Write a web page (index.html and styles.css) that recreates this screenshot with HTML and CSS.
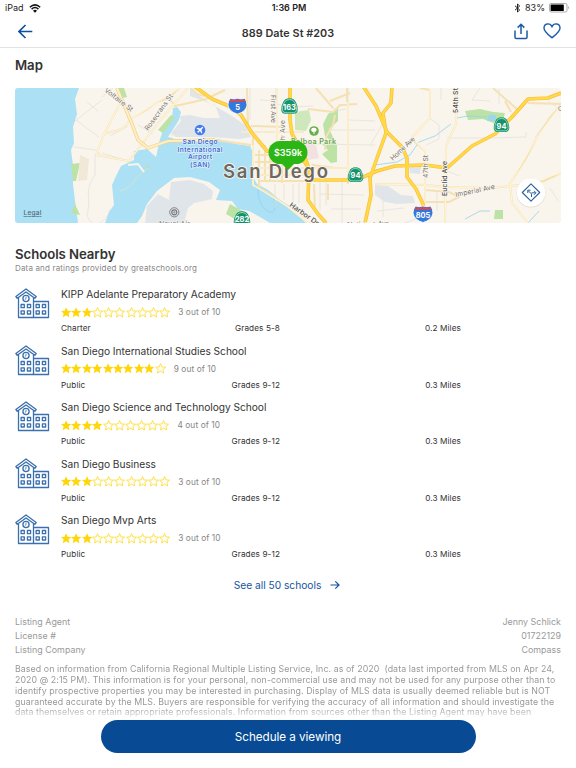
FILE: index.html
```html
<!DOCTYPE html>
<html lang="en">

<head>
	<meta charset="UTF-8">
	<title>889 Date St #203</title>
	<link rel="stylesheet" href="styles.css">
</head>

<body>
	<!-- shared icons -->
	<svg class="defs" width="0" height="0">
		<symbol id="star-on" viewBox="0 0 11 11">
			<path d="M5.4 0 7 3.6 10.9 3.9 8 6.5 8.9 10.5 5.4 8.4 1.9 10.5 2.8 6.5 -.1 3.9 3.8 3.6Z" fill="#ffd60a" />
		</symbol>
		<symbol id="star-off" viewBox="0 0 11 11">
			<path d="M5.5 .6 6.9 3.9 10.500 4.200 7.800 6.500 8.600 10 5.500 8.100 2.400 10 3.200 6.500 .5 4.200 4.100 3.900Z" fill="#fff" stroke="#ffdc32" stroke-width=".9" />
		</symbol>
		<symbol id="school" viewBox="0 0 35 31">
			<g fill="none" stroke="#3b6fae" stroke-width="1.3" stroke-linejoin="round">
				<path d="M3.5 9.5V29.5H33.5V13.5H18.5M18.5 9.5V29.5" />
				<path d="M.9 8.5 11 1 21.2 8.5 19.8 10.3 11 4 2.2 10.3Z" />
				<circle cx="11" cy="10.5" r="3.1" />
				<path d="M11 8.7V10.8L9.8 11.5" stroke-width=".8" />
				<path d="M6.1 16.5h3.2v3.2H6.1zM12.4 16.5h3.2v3.2h-3.2zM6.1 22.8h3.2V26H6.1zM12.4 22.8h3.2V26h-3.2zM21.1 16.5h3.2v3.2h-3.2zM27.4 16.5h3.2v3.2h-3.2zM21.1 22.8h3.2V26h-3.2zM27.4 22.8h3.2V26h-3.2z" />
			</g>
		</symbol>
		<symbol id="shield" viewBox="-9 -9 18 18">
			<path d="M0-8.700Q5-8.700 6.800-4.500Q9-.5 8.700 4Q8 7.800 4.500 7.800H-4.500Q-8 7.800-8.700 4Q-9-.5-6.800-4.500Q-5-8.700 0-8.700Z" fill="#14936b" />
			<path d="M0-7.500Q4.200-7.500 5.800-3.800Q7.800 0 7.500 3.800Q7 6.600 4 6.600H-4Q-7 6.600-7.500 3.800Q-7.800 0-5.800-3.800Q-4.200-7.500 0-7.500Z" fill="none" stroke="#d5f5e6" stroke-width=".7" />
		</symbol>
		<symbol id="interstate" viewBox="-11 -9 22 18">
			<path d="M-7.5-8Q-4-6.7 0-8Q4-6.7 7.5-8Q10-5 10-1Q9 6 0 8.5Q-9 6-10-1Q-10-5-7.5-8Z" fill="#3478dc" stroke="#fff" stroke-width=".8" />
			<path d="M-7.3-7Q-4-5.8 0-7Q4-5.8 7.3-7L8.5-4.5H-8.5Z" fill="#e34545" />
		</symbol>
	</svg>

	<header class="header">
		<div class="status">
			<div class="status-left">
				<span>iPad</span>
				<svg width="12" height="9" viewBox="0 0 12 9">
					<path d="M.8 3.2Q6-1.5 11.2 3.2M2.6 5.1Q6 2 9.4 5.1" fill="none" stroke="#111" stroke-width="1.5" />
					<path d="M4 6.7Q6 5 8 6.7L6 8.8Z" fill="#111" />
				</svg>
			</div>
			<span class="time">1:36 PM</span>
			<div class="status-right">
				<svg width="7" height="10" viewBox="0 0 7 10">
					<path d="M1 2.8 5.7 7 3.5 9V1L5.7 3 1 7.2" fill="none" stroke="#222" stroke-width="1" />
				</svg>
				<span class="percent">83%</span>
				<svg width="21" height="10" viewBox="0 0 21 10">
					<rect x=".5" y=".5" width="17.5" height="8.5" rx="1.5" fill="#fff" stroke="#999" stroke-width=".8" />
					<rect x="1.6" y="1.6" width="13.2" height="6.3" rx=".5" fill="#000" />
					<path d="M19 3Q20.6 4.7 19 6.5Z" fill="#888" />
				</svg>
			</div>
		</div>
		<nav class="nav">
			<svg width="15" height="15" viewBox="0 0 15 15">
				<path d="M14.3 7.5H1M7.5 1 1 7.5 7.5 14" fill="none" stroke="#0d4f9e" stroke-width="1.6" />
			</svg>
			<h1>889 Date St #203</h1>
			<div class="nav-actions">
				<svg width="14" height="17" viewBox="0 0 14 17">
					<path d="M1 7.5V14.2Q1 15.5 2.3 15.5H11.7Q13 15.5 13 14.2V7.5M7 11V1.500M3.700 4.600 7 1.300 10.300 4.600" fill="none" stroke="#1d59a6" stroke-width="1.500" />
				</svg>
				<svg width="18" height="16" viewBox="0 0 18 16">
					<path d="M9 14.8C6 12.3 1 8.7 1 5C1 .2 7-.5 9 3.6C11-.5 17 .2 17 5C17 8.7 12 12.3 9 14.8Z" fill="none" stroke="#1d59a6" stroke-width="1.400" />
				</svg>
			</div>
		</nav>
	</header>

	<main class="content">
		<h2 class="map-title">Map</h2>
		<div class="map">
			<svg width="546" height="135" viewBox="15 88 546 135">
				<rect x="15" y="88" width="546" height="135" fill="#f9f4ec" />
				<!-- ocean and bay -->
				<g fill="#ace0f5">
					<path d="M15 88H79L75 99 77 114 73 127 74 143 71 150 73 165 73 184 75 201 78 223H15Z" />
					<path d="M173 108 177 107 181 112 179 120 168 137 182 141 200 140 218 139 236 144 250 146 254 155 253 177 257 184 268 190 280 200 291 207 306 223H270L260 217 249 211 238 209 232 201 216 200 220 190 209 182 190 177 174 178 157 191 147 204 142 216 137 223H105L109 212 114 205 112 185 116 176 121 166 134 160 134 151 141 150 147 149 156 157 160 139 163 131 172 118Z" />
				</g>
				<!-- airport and navy base -->
				<g fill="#e0e5ea">
					<path d="M180 116 190 115 204 118 220 118 215 105 190 96 190 88 205 100 232 116 245 125 251 137 240 139 210 137 176 137 171 133 181 121Z" />
					<path d="M190 180 204 184 213 191 212 199 194 203 188 208 184 223H145L147 206 158 194 169 200 171 182Z" />
					<path d="M375 185 388 186 401 195 413 196 415 203 397 204 385 202 375 195ZM409 167 421 167 420 174 410 173Z" />
				</g>
				<!-- parks -->
				<g fill="#bce2a6">
					<path d="M71 164 80 163 76 181 73 181ZM158 130 171 115 175 117 163 133ZM146 167 150 165 147 171ZM118 88H124L127 97 122 98ZM323 124 328 114 338 108 338 121 329 129 337 145 337 162 331 163 322 154 328 150 322 144 332 142 325 136ZM465 111 480 109 493 112 505 113 503 120 496 124 483 119 468 120ZM495 210H503V219H494ZM230 204 246 213 240 222 226 214ZM75 204 71 213 80 215Z" />
					<path d="M295 112 309 110 311 120 306 131 295 130Z" opacity=".7" />
				</g>
				<path d="M80 155 89 159 87 180 78 181Z" fill="#f2e8d8" />
				<path d="M305 144 315 141 319 158 308 160Z" fill="#f3e1e2" />
				<path d="M488 115 496 115 496 121 487 121Z" fill="#9bd8e8" />
				<path d="M120 191C134 188 133 177 149 168" fill="none" stroke="#d5e5ca" stroke-width="1" />
				<path d="M128 165 138 164 144 172" fill="none" stroke="#f9f4ec" stroke-width="2" />
				<path d="M258 187C256 212 282 224 273 197M457 118 468 116 487 117M375 165 397 162 410 155 419 142 435 136 451 124M465 219 480 211 490 211M528 223 539 211" fill="none" stroke="#91d4ef" stroke-width=".8" />
				<!-- minor streets -->
				<path d="M75 121 102 100M87 102 98 111M76 120 99 137M74 147 95 150 100 154M102 97 113 88M95 155 95 175C83 193 92 196 87 215 93 233 108 220 110 209M110 136 128 126M153 134 138 125M171 136 176 132 202 132 206 135M102 153 128 161M250 88V120M260 100 276 101V88M277 104 290 107 313 106M322 95 336 111 346 109M348 88V163M349 120 375 121M330 130 375 130M314 144 375 145M275 184V208M284 184V200M293 184V212M299 183V203M320 181V210M326 181V205M342 181V223M319 194 364 195M331 209 361 209M371 144 383 123M429 118 439 125V139L426 145M447 138 490 138 526 137V132M460 176 447 171M441 88V100M480 88 472 100 490 101M499 104 499 89M548 101 561 110M550 188 559 202M437 190V211M383 188V217M377 211 404 208M535 137 550 118M405 223 424 216" fill="none" stroke="#e2e0db" stroke-width=".7" />
				<!-- city roads, casing first -->
				<g fill="none" stroke-linejoin="round">
					<path d="M117 88 132 124 138 140 148 148 168 141 215 140 251 145M188 88 161 119 129 161 96 155 104 134 121 102 116 96M104 134 122 129 132 118 146 110 157 102 169 98 179 88M169 98 175 106 189 103 206 99 225 90M191 88 197 94 205 96M247 88 248 125M251 126 285 127M241 132 304 132M253 136V185L267 192 287 206 317 230M259 150V187M265 145V182M270 145V181M277 88V181M282 135V183M255 155H308M255 162H308M258 168H350M260 175H308M260 181H310M348 103V184M308 109 333 112 340 105 357 104M335 115 333 125 326 137 325 150M312 165 336 168M316 88 333 108M347 88V102M330 101 350 93M420 88 430 90V118L412 137 415 142 425 151V205M457 88 456 124 446 146 445 223M425 202 449 202 459 197 449 192 425 190M375 184 425 185 447 187 492 188 519 185 544 181 561 173M536 139 549 119 561 105M536 139 525 160 510 183 512 203 528 223M493 88 518 110M528 103 561 104M505 101 511 112M314 184 315 210M328 184 328 200" stroke="#f4e1b4" stroke-width="2" />
					<path d="M117 88 132 124 138 140 148 148 168 141 215 140M188 88 161 119 129 161 96 155 104 134 121 102M104 134 122 129 132 118 157 102 179 88M253 145V185L287 206 317 230M277 88V181M241 132H304M258 168H350M260 175H308M348 103V180M457 88 456 124 446 146 445 223M375 184 425 185 447 187 492 188 519 185 561 173M430 88V118L412 137 425 151V205M536 139 510 183 512 203 528 223M536 139 561 105" stroke="#fff6d8" stroke-width="1.2" />
					<path d="M117 88 132 124 138 140 148 148 168 141 215 140" stroke="#f1d08a" stroke-width="3.4" />
					<path d="M117 88 132 124 138 140 148 148 168 141 215 140" stroke="#fff0c0" stroke-width="2" />
				</g>
				<!-- freeways -->
				<g fill="none" stroke-linejoin="round">
					<path d="M194 86 212 99 229 106 241 115 252 133 267 151 290 158 304 161 309 169 308 200 318 214 326 223M290 86V120L292 134 304 154 309 169M309 180H345L361 178 377 171 395 166 425 165 447 168 472 146 495 134 512 117 528 99 548 98 561 93M363 86 376 106 387 132 402 147 407 158 407 177 416 189 423 204V216M392 86 391 103 383 113 386 133 377 158 370 178 371 195 365 223" stroke="#f8bd48" stroke-width="3.6" />
					<path d="M194 86 212 99 229 106 241 115 252 133 267 151 290 158 304 161 309 169 308 200 318 214 326 223M290 86V120L292 134 304 154 309 169M309 180H345L361 178 377 171 395 166 425 165 447 168 472 146 495 134 512 117 528 99 548 98 561 93M363 86 376 106 387 132 402 147 407 158 407 177 416 189 423 204V216M392 86 391 103 383 113 386 133 377 158 370 178 371 195 365 223" stroke="#ffda42" stroke-width="2.3" />
				</g>
				<!-- street names -->
				<g class="street">
					<text transform="translate(104 91) rotate(38)" textLength="34" lengthAdjust="spacingAndGlyphs">Voltaire St</text>
					<text transform="translate(148 131) rotate(-54)" textLength="43">Rosecrans St</text>
					<text transform="translate(271 95) rotate(90)" textLength="28">First Ave</text>
					<text transform="translate(285 148) rotate(-90)" textLength="28">4th Ave</text>
					<text transform="translate(393 161) rotate(-44)" textLength="31">Home Ave</text>
					<text transform="translate(428 178) rotate(-90)" textLength="23">47th St</text>
					<text transform="translate(456 197) rotate(-12)" textLength="40">Imperial Ave</text>
					<text x="159" y="226" textLength="31">Naval Air</text>
					<text x="347" y="227" textLength="28" lengthAdjust="spacingAndGlyphs">National</text>
					<text x="378" y="226" textLength="11" lengthAdjust="spacingAndGlyphs">Ave</text>
					<text x="558" y="111">C</text>
				</g>
				<g class="street dark">
					<text transform="translate(458 113) rotate(-90)" textLength="25">54th St</text>
					<text transform="translate(447 196) rotate(-90)" textLength="35">Euclid Ave</text>
					<text transform="translate(289 206) rotate(35)" textLength="34" lengthAdjust="spacingAndGlyphs">Harbor Dr</text>
				</g>
				<g class="airport">
					<text x="200" y="144" textLength="35">San Diego</text>
					<text x="200" y="151.500" textLength="45">International</text>
					<text x="200" y="159" textLength="24">Airport</text>
					<text x="200" y="166.500" textLength="20">(SAN)</text>
				</g>
				<circle cx="200" cy="130" r="5.3" fill="#477cec" />
				<path d="M203.2 126.8 201.8 127.3 200.3 128.6 197 127.8 196.5 128.5 199 130 197.8 131.5 196.7 131.5 198.5 133.3 198.5 132.2 200 131 201.5 133.5 202.2 133 201.4 129.7 202.7 128.2Z" fill="#fff" />
				<circle cx="314" cy="131" r="4.8" fill="#69ae4a" />
				<path d="M314 127.8a2.5 2 0 0 0-2.4 3.2q.6 1.2 1.9.8v2.3h1v-2.3q1.5.3 2-1a2.3 2.3 0 0 0-2.500-3Z" fill="#fff" />
				<text class="park" x="291" y="144" textLength="45">Balboa Park</text>
				<g fill="none" stroke="#77797c">
					<circle cx="174.3" cy="212.3" r="4.6" stroke-width=".9" />
					<circle cx="174.3" cy="212.3" r="2.5" stroke-width="1.2" />
					<circle cx="174.3" cy="212.3" r=".7" stroke-width=".8" />
				</g>
				<text class="city" x="223" y="178" textLength="105">San Diego</text>
				<!-- route shields -->
				<use href="#interstate" x="227" y="97" width="21" height="18" />
				<use href="#interstate" x="412" y="205" width="22" height="18" />
				<use href="#shield" x="280.5" y="98" width="18" height="17" />
				<use href="#shield" x="347" y="167" width="17" height="16" />
				<use href="#shield" x="493" y="117" width="17" height="16" />
				<use href="#shield" x="232.5" y="211" width="19" height="17" />
				<g class="route">
					<text x="237.5" y="110">5</text>
					<text x="423" y="217.5">805</text>
					<text x="289.5" y="109.8">163</text>
					<text x="355.5" y="178">94</text>
					<text x="501.5" y="128.5">94</text>
					<text x="242" y="221.8">282</text>
				</g>
				<!-- price marker -->
				<path d="M280 141H296A11 11 0 0 1 296 164H294L288 170 282 164H280A11 11 0 0 1 280 141Z" fill="#2bb616" />
				<text class="price" x="288" y="156" textLength="28">$359k</text>
				<text class="legal" x="23.500" y="215" textLength="18">Legal</text>
				<!-- directions button -->
				<circle cx="531" cy="193" r="14.5" fill="#ddd9d2" />
				<circle cx="531" cy="192.5" r="14.3" fill="#fff" />
				<g fill="none" stroke="#285f9f" stroke-width="1.1" stroke-linejoin="round">
					<path d="M531 183.8 539.7 192.5 531 201.2 522.3 192.5Z" />
					<path d="M531.5 197V194L528 190.5M527.8 193V190.2H530.6M531.500 192.8H535.5M534 190.8 536 192.8 534 194.800" stroke-width="1" />
				</g>
			</svg>
		</div>

		<section class="schools">
			<h2>Schools Nearby</h2>
			<p class="source">Data and ratings provided by greatschools.org</p>
			<div class="school">
				<svg class="school-icon"><use href="#school" /></svg>
				<div class="school-info">
					<h3>KIPP Adelante Preparatory Academy</h3>
					<div class="rating" data-rating="3"><span>3 out of 10</span></div>
					<div class="facts"><span>Charter</span><span>Grades 5-8</span><span>0.2 Miles</span></div>
				</div>
			</div>
			<div class="school">
				<svg class="school-icon"><use href="#school" /></svg>
				<div class="school-info">
					<h3>San Diego International Studies School</h3>
					<div class="rating" data-rating="9"><span>9 out of 10</span></div>
					<div class="facts"><span>Public</span><span>Grades 9-12</span><span>0.3 Miles</span></div>
				</div>
			</div>
			<div class="school">
				<svg class="school-icon"><use href="#school" /></svg>
				<div class="school-info">
					<h3>San Diego Science and Technology School</h3>
					<div class="rating" data-rating="4"><span>4 out of 10</span></div>
					<div class="facts"><span>Public</span><span>Grades 9-12</span><span>0.3 Miles</span></div>
				</div>
			</div>
			<div class="school">
				<svg class="school-icon"><use href="#school" /></svg>
				<div class="school-info">
					<h3>San Diego Business</h3>
					<div class="rating" data-rating="3"><span>3 out of 10</span></div>
					<div class="facts"><span>Public</span><span>Grades 9-12</span><span>0.3 Miles</span></div>
				</div>
			</div>
			<div class="school">
				<svg class="school-icon"><use href="#school" /></svg>
				<div class="school-info">
					<h3>San Diego Mvp Arts</h3>
					<div class="rating" data-rating="3"><span>3 out of 10</span></div>
					<div class="facts"><span>Public</span><span>Grades 9-12</span><span>0.3 Miles</span></div>
				</div>
			</div>
			<a class="see-all" href="#">
				<span>See all 50 schools</span>
				<svg width="10" height="10" viewBox="0 0 10 10">
					<path d="M.5 5H9M5.3 1.3 9 5 5.3 8.7" fill="none" stroke="#14539e" stroke-width="1.2" />
				</svg>
			</a>
		</section>

		<section class="listing">
			<div class="listing-row"><span>Listing Agent</span><span>Jenny Schlick</span></div>
			<div class="listing-row"><span>License #</span><span>01722129</span></div>
			<div class="listing-row"><span>Listing Company</span><span>Compass</span></div>
			<p class="legal-text">Based on information from California Regional Multiple Listing Service, Inc. as of 2020 &nbsp;(data last imported from MLS on Apr 24,<br>2020 @ 2:15 PM). This information is for your personal, non-commercial use and may not be used for any purpose other than to<br>identify prospective properties you may be interested in purchasing. Display of MLS data is usually deemed reliable but is NOT<br>guaranteed accurate by the MLS. Buyers are responsible for verifying the accuracy of all information and should investigate the<br>data themselves or retain appropriate professionals. Information from sources other than the Listing Agent may have been</p>
		</section>
	</main>

	<footer class="footer">
		<button class="schedule">Schedule a viewing</button>
	</footer>

	<script>
		// ten stars in front of each "n out of 10"
		var ratings = document.querySelectorAll('.rating');
		for (var i = 0; i < ratings.length; i++) {
			var stars = '';
			for (var j = 0; j < 10; j++) {
				var state = j < ratings[i].dataset.rating ? 'on' : 'off';
				stars += '<svg class="star ' + state + '"><use href="#star-' + state + '"/></svg>';
			}
			ratings[i].insertAdjacentHTML('afterbegin', stars);
		}
	</script>
</body>

</html>
```
FILE: styles.css
```css
* {
	box-sizing: border-box;
}

body {
	margin: 0;
	height: 768px;
	overflow: hidden;
	background: #fff;
	color: #333;
	font-family: Inter, "Liberation Sans", sans-serif;
	display: flex;
	flex-direction: column;
}

h1, h2, h3, p {
	margin: 0;
}

svg {
	display: block;
	flex: none;
}

.defs {
	height: 0;
	overflow: hidden;
}

/* header */
.header {
	flex: none;
	height: 48px;
	border-bottom: 1.5px solid #e3e3e3;
}

.status {
	height: 16px;
	padding: 0 6px 0 5px;
	display: grid;
	grid-template-columns: 1fr auto 1fr;
	align-items: center;
	font-size: 9px;
	line-height: 16px;
	color: #222;
}

.status-left, .status-right {
	display: flex;
	align-items: center;
	gap: 5px;
}

.status-right {
	justify-content: flex-end;
	gap: 4px;
}

.time {
	padding-left: 3px;
	font-weight: 600;
}

.nav {
	height: 30px;
	padding: 0 15px 0 18px;
	display: grid;
	grid-template-columns: 1fr auto 1fr;
	align-items: center;
}

.nav h1 {
	margin-left: -3px;
	padding-top: 5px;
	font-size: 10.8px;
	font-weight: 600;
	line-height: 14px;
	letter-spacing: 0.05px;
}

.nav-actions {
	display: flex;
	justify-content: flex-end;
	align-items: center;
	gap: 15px;
}

/* content */
.content {
	height: 672px;
	padding: 0 15px;
	overflow: hidden;
}

h2 {
	font-size: 13.2px;
	font-weight: 600;
	line-height: 18px;
	letter-spacing: -0.05px;
}

.map-title {
	padding: 8px 0 14px;
}

.map {
	height: 135px;
	border-radius: 3px;
	overflow: hidden;
}

.street {
	font-size: 6.8px;
	fill: #77736d;
	stroke: #fbf8f1;
	stroke-width: 1.2px;
	paint-order: stroke;
}

.street.dark {
	fill: #4c4b48;
	font-weight: 500;
}

.airport {
	font-size: 6.6px;
	font-weight: 600;
	text-anchor: middle;
	fill: #4169cf;
	stroke: #eef6fa;
	stroke-width: 1px;
	paint-order: stroke;
}

.park {
	font-size: 7.2px;
	font-weight: 600;
	fill: #65a34c;
	stroke: #fbf8f1;
	stroke-width: 1px;
	paint-order: stroke;
}

.city {
	font-size: 18.5px;
	font-weight: 600;
	fill: #6d6861;
	stroke: #fbf8f1;
	stroke-width: 1.5px;
	paint-order: stroke;
}

.route {
	font-size: 7.4px;
	font-weight: 700;
	text-anchor: middle;
	fill: #fff;
}

.price {
	font-size: 9px;
	font-weight: 600;
	text-anchor: middle;
	fill: #fff;
}

.legal {
	font-size: 6.6px;
	font-weight: 500;
	fill: #526b75;
	text-decoration: underline;
}

/* schools */
.schools {
	padding-top: 22px;
}

.source {
	margin-bottom: 14px;
	font-size: 8px;
	line-height: 10px;
	letter-spacing: 0.16px;
	color: #888;
}

.school {
	height: 56.6px;
	display: flex;
	gap: 11px;
}

.school-icon {
	width: 35px;
	height: 31px;
	margin-top: 1px;
}

.school-info h3 {
	font-size: 10.2px;
	font-weight: 400;
	line-height: 15px;
	letter-spacing: -0.03px;
}

.rating {
	height: 18px;
	margin-top: 1px;
	display: flex;
	align-items: center;
	font-size: 8.3px;
	color: #858585;
}

.rating span {
	margin-left: 8px;
	letter-spacing: 0.1px;
}

.star {
	width: 10.4px;
	height: 11px;
	overflow: visible;
}

.star.off {
	width: 11.15px;
}

.facts {
	margin-top: 1px;
	display: grid;
	grid-template-columns: 100px 119px 181px;
	font-size: 8.2px;
	line-height: 12px;
	letter-spacing: 0.1px;
}

.facts span + span {
	text-align: right;
}

.see-all {
	height: 18px;
	margin-top: 6.5px;
	padding-right: 2px;
	display: flex;
	justify-content: center;
	align-items: center;
	gap: 9px;
	font-size: 10.2px;
	color: #14539e;
	text-decoration: none;
}

/* listing */
.listing {
	padding-top: 20.5px;
	color: #999;
}

.listing-row {
	display: flex;
	justify-content: space-between;
	font-size: 8.9px;
	line-height: 13.9px;
	letter-spacing: 0.02px;
}

.legal-text {
	margin-top: 7.5px;
	font-size: 8.8px;
	line-height: 10.8px;
	letter-spacing: 0.08px;
	white-space: nowrap;
	-webkit-mask-image: linear-gradient(#000 80%, transparent 104%);
	mask-image: linear-gradient(#000 80%, transparent 104%);
}

/* bottom button */
.footer {
	flex: none;
	height: 48px;
	display: flex;
	justify-content: center;
	align-items: flex-start;
}

.schedule {
	width: 375px;
	height: 33px;
	border: 0;
	border-radius: 17px;
	background: #084a94;
	color: #fff;
	font-family: inherit;
	font-size: 11.7px;
	letter-spacing: -0.05px;
}
```
